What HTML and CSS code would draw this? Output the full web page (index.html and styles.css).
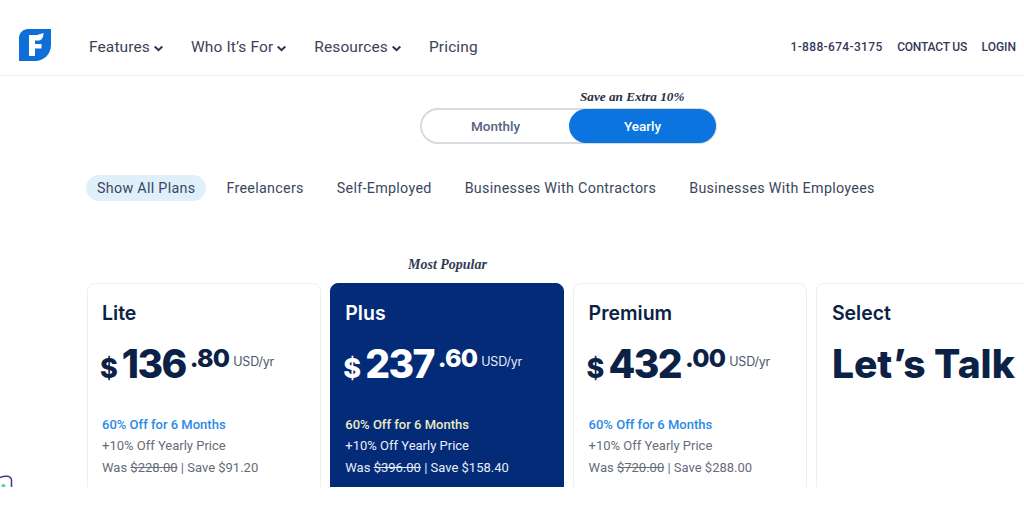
FILE: index.html
```html
<!DOCTYPE html>
<html lang="en">
<head>
<meta charset="utf-8">
<title>Pricing</title>
<link rel="stylesheet" href="styles.css">
</head>
<body>
<div class="page">
  <header class="top">
    <svg class="logo" viewBox="0 0 32 32" width="32" height="32"><path d="M9 0H32V16C32 25 25 32 16 32H0V9C0 4 4 0 9 0Z" fill="#0e6fd8"/><path d="M10 6H18L24.500 4C24.500 8 23 11 20 11.500H16V15H22.500V19.500H16V27H10Z" fill="#fff"/></svg>
    <nav class="nav">
      <a class="nav-link">Features<svg class="chev" viewBox="0 0 10 7"><path d="M1.200 1.500L5 5.200L8.800 1.500" /></svg></a>
      <a class="nav-link">Who It’s For<svg class="chev" viewBox="0 0 10 7"><path d="M1.200 1.500L5 5.200L8.800 1.500" /></svg></a>
      <a class="nav-link">Resources<svg class="chev" viewBox="0 0 10 7"><path d="M1.200 1.500L5 5.200L8.800 1.500" /></svg></a>
      <a class="nav-link">Pricing</a>
    </nav>
    <div class="utility">
      <a class="phone">1-888-674-3175</a>
      <a class="contact">CONTACT US</a>
      <a>LOGIN</a>
    </div>
  </header>

  <section class="billing">
    <p class="save">Save an Extra 10%</p>
    <div class="toggle">
      <span class="opt">Monthly</span>
      <span class="opt opt-on">Yearly</span>
    </div>
  </section>

  <div class="filters">
    <span class="filter filter-on">Show All Plans</span>
    <span class="filter">Freelancers</span>
    <span class="filter">Self-Employed</span>
    <span class="filter">Businesses With Contractors</span>
    <span class="filter">Businesses With Employees</span>
  </div>

  <p class="popular">Most Popular</p>

  <div class="cards">
    <article class="card">
      <h2>Lite</h2>
      <div class="price"><span class="cur">$</span><span class="whole">136</span><span class="cents">.80</span><span class="unit">USD/yr</span></div>
      <div class="offer">
        <p class="deal">60% Off for 6 Months</p>
        <p>+10% Off Yearly Price</p>
        <p>Was <s>$228.00</s> | Save $91.20</p>
      </div>
    </article>
    <article class="card card-dark">
      <h2>Plus</h2>
      <div class="price"><span class="cur">$</span><span class="whole">237</span><span class="cents">.60</span><span class="unit">USD/yr</span></div>
      <div class="offer">
        <p class="deal">60% Off for 6 Months</p>
        <p>+10% Off Yearly Price</p>
        <p>Was <s>$396.00</s> | Save $158.40</p>
      </div>
    </article>
    <article class="card">
      <h2>Premium</h2>
      <div class="price"><span class="cur">$</span><span class="whole">432</span><span class="cents">.00</span><span class="unit">USD/yr</span></div>
      <div class="offer">
        <p class="deal">60% Off for 6 Months</p>
        <p>+10% Off Yearly Price</p>
        <p>Was <s>$720.00</s> | Save $288.00</p>
      </div>
    </article>
    <article class="card card-last">
      <h2>Select</h2>
      <div class="talk">Let’s Talk</div>
    </article>
  </div>

  <svg class="stray" viewBox="0 0 14 12" width="14" height="12"><path d="M0 2.500C5 0.500 11 0.500 11.500 5V12" fill="none" stroke="#3f3a84" stroke-width="1.500"/><circle cx="3.500" cy="11" r="2" fill="#4fd3a0"/></svg>
</div>
</body>
</html>
```
FILE: styles.css
```css
* { box-sizing: border-box; }
html, body { margin: 0; padding: 0; background: #fff; }
body { width: 1024px; height: 512px; overflow: hidden; font-family: Roboto, "Liberation Sans", sans-serif; color: #1b2b4b; }
p, h2 { margin: 0; }

.page { position: relative; height: 487px; overflow: hidden; }

.top { display: flex; align-items: center; height: 76px; padding: 19px 8px 0 19px; border-bottom: 1px solid #ececee; }
.logo { flex: none; margin-top: -4px; }
.nav { display: flex; gap: 27px; margin-left: 38px; }
.nav-link { display: flex; align-items: center; gap: 3px; font-size: 15.500px; letter-spacing: .120px; color: #3d4258; }
.chev { width: 11px; height: 7px; margin-top: 2px; }
.chev path { fill: none; stroke: #2c3350; stroke-width: 2; }
.utility { display: flex; gap: 14.500px; margin-left: auto; font-size: 12px; font-weight: 500; color: #35395a; }
.phone { letter-spacing: .350px; }
.contact { letter-spacing: -.200px; }

.billing { margin-top: 12px; }
.save { margin-left: 580px; font: italic 700 13.200px/17px "Liberation Serif", serif; color: #28304a; }
.toggle { display: flex; width: 297px; height: 36px; margin: 3px 0 0 420px; border: 2px solid #d9dbde; border-radius: 18px; }
.opt { flex: 1; display: flex; align-items: center; justify-content: center; font-size: 13.500px; font-weight: 500; color: #55657e; }
.opt-on { flex: none; width: 147px; height: 34px; margin: -1px -1px 0 0; background: #0b74de; border-radius: 17px; color: #fff; }

.filters { display: flex; align-items: center; gap: 33px; margin: 31px 0 0 86px; font-size: 14.300px; letter-spacing: .300px; color: #3c4660; }
.filter-on { height: 26px; padding: 0 11px; margin-right: -13px; display: flex; align-items: center; background: #dff0fb; border-radius: 13px; }

.popular { margin: 55px 0 0 408px; font: italic 700 14px/17px "Liberation Serif", serif; color: #333a50; }

.cards { display: flex; gap: 9.300px; margin: 10px 0 0 86.500px; }
.card { flex: none; width: 234px; height: 240px; padding: 17px 14.500px; border: 1px solid #eceef0; border-radius: 8px; color: #0b2246; }
.card-dark { background: #032b77; border-color: #032b77; color: #fff; }
.card-last { width: 300px; }
.card h2 { font: 600 19.500px/24px Inter, sans-serif; }

.price { display: flex; align-items: flex-start; height: 50px; margin: 15px 0 0 -2px; font-family: Inter, sans-serif; }
.cur { font-size: 27px; font-weight: 800; margin-top: 12px; }
.whole { font-size: 39px; font-weight: 800; line-height: 48px; margin-left: 4px; letter-spacing: -1.600px; }
.cents { font-size: 25px; font-weight: 800; line-height: 30px; margin-left: 4px; margin-top: 3px; letter-spacing: -.800px; }
.unit { font-size: 12.500px; line-height: 18px; margin: 13px 0 0 4px; letter-spacing: -.200px; color: #4d566a; }
.card-dark .unit { color: #e6ecf8; }

.offer { margin-top: 23.700px; font-size: 13px; line-height: 21.500px; color: #666c7a; }
.deal { font-weight: 500; color: #2a8ae6; }
.card-dark .offer { color: #e8edf7; }
.card-dark .deal { color: #ece9c8; }

.talk { margin-top: 15px; font: 800 39px/48px Inter, sans-serif; }

.stray { position: absolute; left: 0; bottom: 0; }
```
